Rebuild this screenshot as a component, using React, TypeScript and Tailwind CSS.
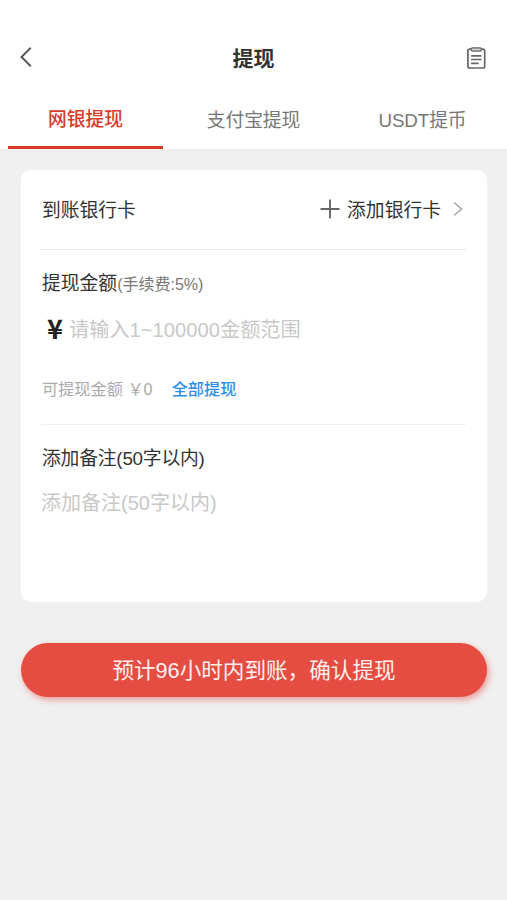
import React, { useState } from 'react';

const tabs = ['网银提现', '支付宝提现', 'USDT提币'];

const Header: React.FC = () => (
  <header className="flex h-[90px] items-center justify-between px-5 pt-[27px]">
    <button type="button" aria-label="返回" className="flex w-6 pb-[3px]">
      <svg width="12" height="20" viewBox="0 0 12 20" fill="none" stroke="#555" strokeWidth="1.9" strokeLinecap="round">
        <path d="M10.3 1.3L1.5 10L10.3 18.7" />
      </svg>
    </button>
    <h1 className="pt-px text-[21px] font-bold text-[#333]">提现</h1>
    <button type="button" aria-label="提现记录" className="flex w-6 pb-px pl-1">
      <svg width="19" height="22" viewBox="0 0 19 22" fill="none" stroke="#666" strokeWidth="1.7">
        <rect x="0.9" y="2.2" width="16.8" height="18.8" rx="1.8" />
        <rect x="4.2" y="0.8" width="10.2" height="3.4" rx="1.4" fill="#ccc" strokeWidth="1.3" />
        <path d="M4.8 8.8H13.8M4.8 12.5H13.8M4.8 16.3H11" strokeLinecap="round" />
      </svg>
    </button>
  </header>
);

const App: React.FC = () => {
  const [activeTab, setActiveTab] = useState(0);

  return (
    <div className="min-h-screen bg-[#f0f0f0] font-['Liberation_Sans','Noto_Sans_CJK_SC',sans-serif] text-[#333]">
      <div className="bg-white">
        <Header />
        <nav className="grid h-[59px] grid-cols-3">
          {tabs.map((tab, index) => (
            <button
              key={tab}
              type="button"
              onClick={() => setActiveTab(index)}
              className={
                index === activeTab
                  ? 'ml-2 mr-1.5 border-b-[3px] border-[#d93a2b] pt-1 text-[18.8px] font-medium text-[#d93a2b]'
                  : 'ml-[7px] mr-[7px] pt-[3px] text-[18.8px] tracking-[-0.1px] text-[#777]'
              }
            >
              {tab}
            </button>
          ))}
        </nav>
      </div>

      <main className="pl-[21px] pr-5 pt-[21px]">
        <section className="h-[432px] rounded-[10px] bg-white pl-5 pr-[21px]">
          <div className="flex h-20 items-center justify-between border-b border-[#ebebeb]">
            <span className="pl-px pt-[3px] text-[18.8px]">到账银行卡</span>
            <button type="button" className="flex items-center text-[18.8px]">
              <svg width="20" height="20" viewBox="0 0 20 20" stroke="#666" strokeWidth="1.9" className="mb-0.5 mr-[7px]">
                <path d="M10 0.5V19.5M0.5 10H19.5" />
              </svg>
              <span className="pt-[3px]">添加银行卡</span>
              <svg width="10" height="16" viewBox="0 0 10 16" fill="none" stroke="#aaa" strokeWidth="1.6" className="mb-0.5 ml-3 mr-[3px]">
                <path d="M1 1.5L8.5 8L1 14.5" />
              </svg>
            </button>
          </div>

          <div className="h-[175px] border-b border-[#f0f0f0] pt-5">
            <div className="pl-px text-[18.8px] leading-7">
              提现金额<span className="text-base text-[#777]">(手续费:5%)</span>
            </div>
            <label className="mt-4 flex h-[30px] items-center">
              <span className="w-7 pb-[3px] text-center font-['Noto_Sans_CJK_SC',sans-serif] text-[27px] leading-none font-bold text-[#222]">¥</span>
              <input
                className="min-w-0 flex-1 pt-0.5 text-[20.2px] outline-none placeholder:text-[#c8c8c8]"
                placeholder="请输入1~100000金额范围"
              />
            </label>
            <div className="mt-[33px] flex pl-px text-[16.2px]">
              <span className="text-[#aaa]">可提现金额 ￥0</span>
              <button type="button" className="ml-[19px] font-medium text-[#2b8ff0]">全部提现</button>
            </div>
          </div>

          <div className="pt-5">
            <div className="pl-px text-[18.8px] leading-7 tracking-[-0.2px]">添加备注(50字以内)</div>
            <textarea
              className="mt-4 h-20 w-full resize-none text-xl outline-none placeholder:text-[#c8c8c8]"
              placeholder="添加备注(50字以内)"
            />
          </div>
        </section>

        <button
          type="button"
          className="mt-[41px] h-[54px] w-full rounded-full bg-[#e54c42] pt-0.5 text-[21.6px] text-[#fff0ee] shadow-[2px_3px_6px_#e64b4180]"
        >
          预计96小时内到账，确认提现
        </button>
      </main>
    </div>
  );
};

export default App;
